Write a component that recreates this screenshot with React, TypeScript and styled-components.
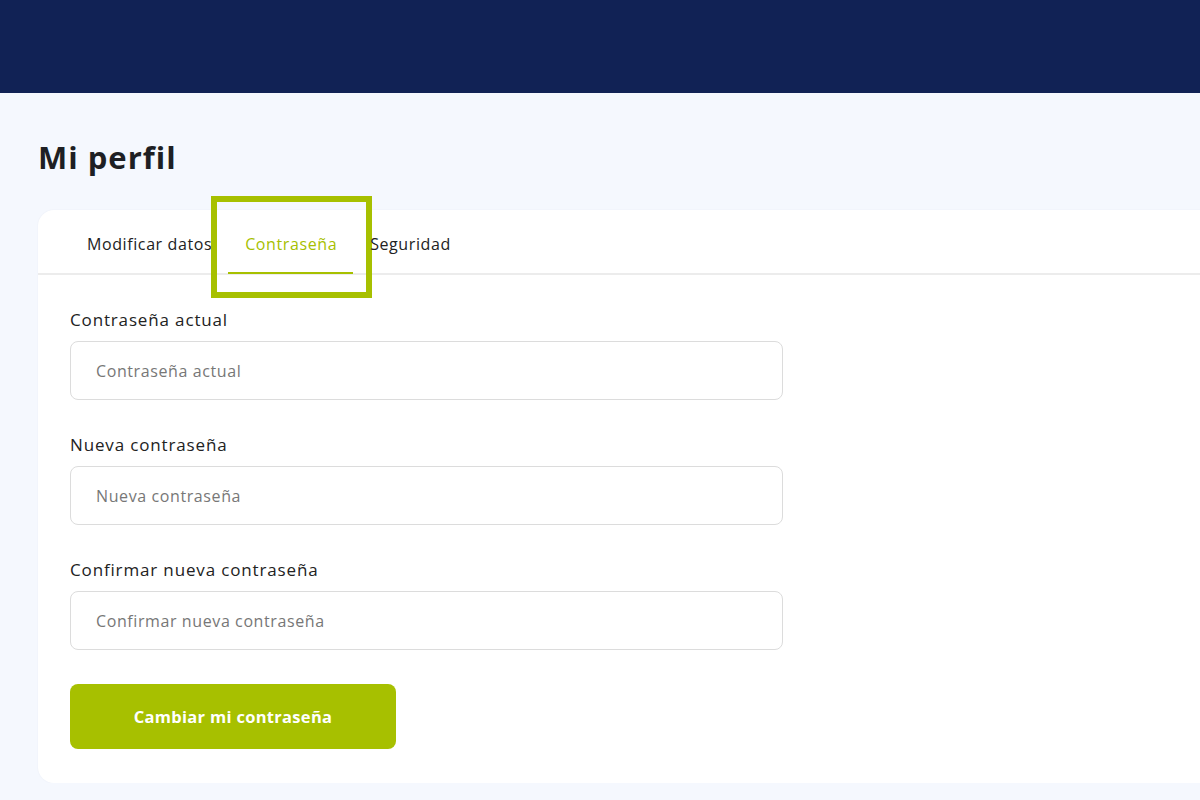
import React from 'react'
import styled, { createGlobalStyle } from 'styled-components'

const GlobalStyle = createGlobalStyle`
  html, body {
    margin: 0;
    padding: 0;
    background: #f5f8fe;
    font-family: 'Open Sans', 'Noto Sans', sans-serif;
    color: #222;
    overflow: hidden;
  }
  * { box-sizing: border-box; }
`

const TopBar = styled.header`
  height: 93px;
  background: #112255;
`

const Page = styled.main`
  padding: 40px 0 0 38px;
`

const Title = styled.h1`
  margin: 0 0 29px;
  font-size: 31px;
  font-weight: 700;
  letter-spacing: 1px;
  line-height: 48px;
  color: #1e1f24;
`

const Card = styled.section`
  background: #fff;
  border-radius: 16px 0 0 16px;
  margin-right: -20px;
  padding-bottom: 34px;
  box-shadow: 0 0 2px rgba(20, 30, 80, 0.05);
`

const Tabs = styled.nav`
  display: flex;
  padding-left: 32px;
  height: 65px;
  border-bottom: 2px solid #ececec;
`

const Tab = styled.div<{ $active?: boolean }>`
  position: relative;
  display: flex;
  align-items: center;
  padding: 5px 16px 0 17px;
  font-size: 16px;
  letter-spacing: 0.6px;
  color: ${(p) => (p.$active ? '#a7c000' : '#222')};
  border-bottom: 2px solid ${(p) => (p.$active ? '#a7c000' : 'transparent')};
  margin-bottom: -1px;
`

// annotation frame around the active tab
const Highlight = styled.div`
  position: absolute;
  left: -17px;
  right: -19px;
  top: -14px;
  bottom: -26px;
  border: 6px solid #a7c000;
  pointer-events: none;
`

const Form = styled.form`
  display: flex;
  flex-direction: column;
  padding: 34px 0 0 32px;
  width: 745px;
`

const Field = styled.div`
  display: flex;
  flex-direction: column;
  margin-bottom: 34px;
`

const Label = styled.label`
  font-size: 17px;
  font-weight: 500;
  letter-spacing: 0.85px;
  color: #222;
  line-height: 22px;
  margin-bottom: 10px;
`

const Input = styled.input`
  height: 59px;
  border: 1px solid #dcdcdc;
  border-radius: 8px;
  padding: 0 25px;
  font-family: inherit;
  font-size: 16px;
  letter-spacing: 0.6px;
  color: #222;
  &::placeholder {
    color: #777;
  }
`

const Button = styled.button`
  width: 326px;
  height: 65px;
  border: none;
  border-radius: 8px;
  background: #a7c000;
  color: #fff;
  font-family: inherit;
  font-size: 16.5px;
  font-weight: 700;
  letter-spacing: 0.3px;
  cursor: pointer;
`

const fields = ['Contraseña actual', 'Nueva contraseña', 'Confirmar nueva contraseña']

export default function App() {
  return (
    <>
      <GlobalStyle />
      <TopBar />
      <Page>
        <Title>Mi perfil</Title>
        <Card>
          <Tabs>
            <Tab>Modificar datos</Tab>
            <Tab $active>
              Contraseña
              <Highlight />
            </Tab>
            <Tab>Seguridad</Tab>
          </Tabs>
          <Form onSubmit={(e) => e.preventDefault()}>
            {fields.map((f) => (
              <Field key={f}>
                <Label>{f}</Label>
                <Input type="password" placeholder={f} />
              </Field>
            ))}
            <Button type="submit">Cambiar mi contraseña</Button>
          </Form>
        </Card>
      </Page>
    </>
  )
}
